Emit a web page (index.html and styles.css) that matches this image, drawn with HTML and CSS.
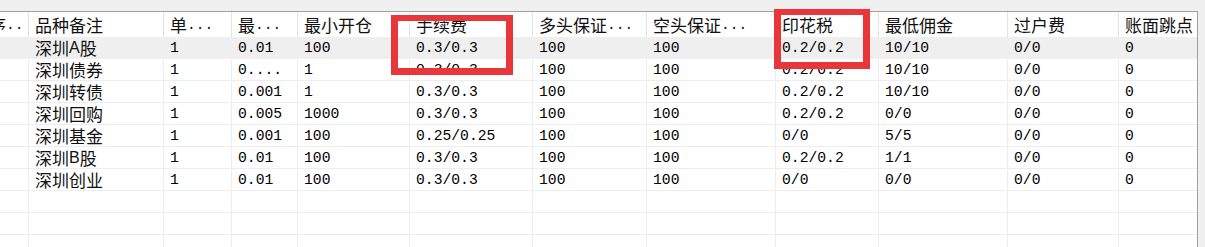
FILE: index.html
```html
<!DOCTYPE html>
<html lang="zh-CN">
<head>
<meta charset="utf-8">
<title>品种设置</title>
<link rel="stylesheet" href="styles.css">
</head>
<body>
<div class="window">
  <div class="topbar"></div>
  <div class="view">
    <div class="table">
      <div class="row head">
        <div class="cell c">序<span class="m">..</span></div>
        <div class="cell c">品种备注</div>
        <div class="cell c">单<span class="m">...</span></div>
        <div class="cell c">最<span class="m">...</span></div>
        <div class="cell c">最小开仓</div>
        <div class="cell c">手续费</div>
        <div class="cell c">多头保证<span class="m">...</span></div>
        <div class="cell c">空头保证<span class="m">...</span></div>
        <div class="cell c">印花税</div>
        <div class="cell c">最低佣金</div>
        <div class="cell c">过户费</div>
        <div class="cell c">账面跳点</div>
      </div>
      <div class="row selected">
        <div class="cell"></div>
        <div class="cell c">深圳<span class="lat">A</span>股</div>
        <div class="cell">1</div>
        <div class="cell">0.01</div>
        <div class="cell">100</div>
        <div class="cell">0.3/0.3</div>
        <div class="cell">100</div>
        <div class="cell">100</div>
        <div class="cell">0.2/0.2</div>
        <div class="cell">10/10</div>
        <div class="cell">0/0</div>
        <div class="cell">0</div>
      </div>
      <div class="row">
        <div class="cell"></div>
        <div class="cell c">深圳债券</div>
        <div class="cell">1</div>
        <div class="cell">0....</div>
        <div class="cell">1</div>
        <div class="cell">0.3/0.3</div>
        <div class="cell">100</div>
        <div class="cell">100</div>
        <div class="cell">0.2/0.2</div>
        <div class="cell">10/10</div>
        <div class="cell">0/0</div>
        <div class="cell">0</div>
      </div>
      <div class="row">
        <div class="cell"></div>
        <div class="cell c">深圳转债</div>
        <div class="cell">1</div>
        <div class="cell">0.001</div>
        <div class="cell">1</div>
        <div class="cell">0.3/0.3</div>
        <div class="cell">100</div>
        <div class="cell">100</div>
        <div class="cell">0.2/0.2</div>
        <div class="cell">10/10</div>
        <div class="cell">0/0</div>
        <div class="cell">0</div>
      </div>
      <div class="row">
        <div class="cell"></div>
        <div class="cell c">深圳回购</div>
        <div class="cell">1</div>
        <div class="cell">0.005</div>
        <div class="cell">1000</div>
        <div class="cell">0.3/0.3</div>
        <div class="cell">100</div>
        <div class="cell">100</div>
        <div class="cell">0.2/0.2</div>
        <div class="cell">0/0</div>
        <div class="cell">0/0</div>
        <div class="cell">0</div>
      </div>
      <div class="row">
        <div class="cell"></div>
        <div class="cell c">深圳基金</div>
        <div class="cell">1</div>
        <div class="cell">0.001</div>
        <div class="cell">100</div>
        <div class="cell">0.25/0.25</div>
        <div class="cell">100</div>
        <div class="cell">100</div>
        <div class="cell">0/0</div>
        <div class="cell">5/5</div>
        <div class="cell">0/0</div>
        <div class="cell">0</div>
      </div>
      <div class="row">
        <div class="cell"></div>
        <div class="cell c">深圳<span class="lat">B</span>股</div>
        <div class="cell">1</div>
        <div class="cell">0.01</div>
        <div class="cell">100</div>
        <div class="cell">0.3/0.3</div>
        <div class="cell">100</div>
        <div class="cell">100</div>
        <div class="cell">0.2/0.2</div>
        <div class="cell">1/1</div>
        <div class="cell">0/0</div>
        <div class="cell">0</div>
      </div>
      <div class="row">
        <div class="cell"></div>
        <div class="cell c">深圳创业</div>
        <div class="cell">1</div>
        <div class="cell">0.01</div>
        <div class="cell">100</div>
        <div class="cell">0.3/0.3</div>
        <div class="cell">100</div>
        <div class="cell">100</div>
        <div class="cell">0/0</div>
        <div class="cell">0/0</div>
        <div class="cell">0/0</div>
        <div class="cell">0</div>
      </div>
      <div class="row empty">
        <div class="cell"></div><div class="cell"></div><div class="cell"></div><div class="cell"></div>
        <div class="cell"></div><div class="cell"></div><div class="cell"></div><div class="cell"></div>
        <div class="cell"></div><div class="cell"></div><div class="cell"></div><div class="cell"></div>
      </div>
      <div class="row empty">
        <div class="cell"></div><div class="cell"></div><div class="cell"></div><div class="cell"></div>
        <div class="cell"></div><div class="cell"></div><div class="cell"></div><div class="cell"></div>
        <div class="cell"></div><div class="cell"></div><div class="cell"></div><div class="cell"></div>
      </div>
      <div class="row empty">
        <div class="cell"></div><div class="cell"></div><div class="cell"></div><div class="cell"></div>
        <div class="cell"></div><div class="cell"></div><div class="cell"></div><div class="cell"></div>
        <div class="cell"></div><div class="cell"></div><div class="cell"></div><div class="cell"></div>
      </div>
    </div>
  </div>
  <div class="mark mark-fee"></div>
  <div class="mark mark-stamp"></div>
</div>
</body>
</html>
```
FILE: styles.css
```css
html, body {
  margin: 0;
  padding: 0;
  background: #f0f0f0;
}

.window {
  position: relative;
  width: 1205px;
  height: 247px;
  overflow: hidden;
  background: #f0f0f0;
  display: flex;
  flex-direction: column;
}

.topbar {
  height: 11px;
  flex: none;
}

.view {
  width: 1197px;
  flex: 1;
  background: #ffffff;
  border-top: 1px solid #a0a0a0;
  border-right: 1px solid #a0a0a0;
  overflow: hidden;
}

.table {
  display: flex;
  flex-direction: column;
  margin-left: -17px;
}

.row {
  display: grid;
  grid-template-columns: 46px 135px 68px 66px 112px 123px 114px 129px 103px 129px 111px 120px;
  height: 22px;
}

.row.head {
  height: 25px;
}

.cell {
  box-sizing: border-box;
  display: flex;
  align-items: center;
  padding-left: 6px;
  white-space: nowrap;
  overflow: hidden;
  line-height: 18px;
  border-right: 1px solid #ededed;
  border-bottom: 1px solid #ededed;
  font-family: "Liberation Mono", "DejaVu Sans Mono", monospace;
  font-size: 14.7px;
  color: #000000;
}

.head .cell {
  border-bottom: none;
  border-right: 1px solid #e3e3e3;
  background: #ffffff;
}

.selected .cell {
  background: #efefef;
  border-color: #efefef;
}

.cell.c {
  font-family: "Noto Sans CJK SC", "Noto Sans", sans-serif;
  font-size: 17px;
  color: #111111;
}

.m {
  font-family: "Liberation Mono", monospace;
  font-size: 14.5px;
  vertical-align: -2px;
}

.lat {
  font-family: "Liberation Sans", sans-serif;
  font-size: 16px;
}

.mark {
  position: absolute;
  box-sizing: border-box;
  border: 7px solid #e8363a;
}

.mark-fee {
  left: 391px;
  top: 15px;
  width: 122px;
  height: 60px;
  border-top-width: 6px;
}

.mark-stamp {
  left: 774px;
  top: 9px;
  width: 96px;
  height: 60px;
  border-top-width: 6px;
}
```
